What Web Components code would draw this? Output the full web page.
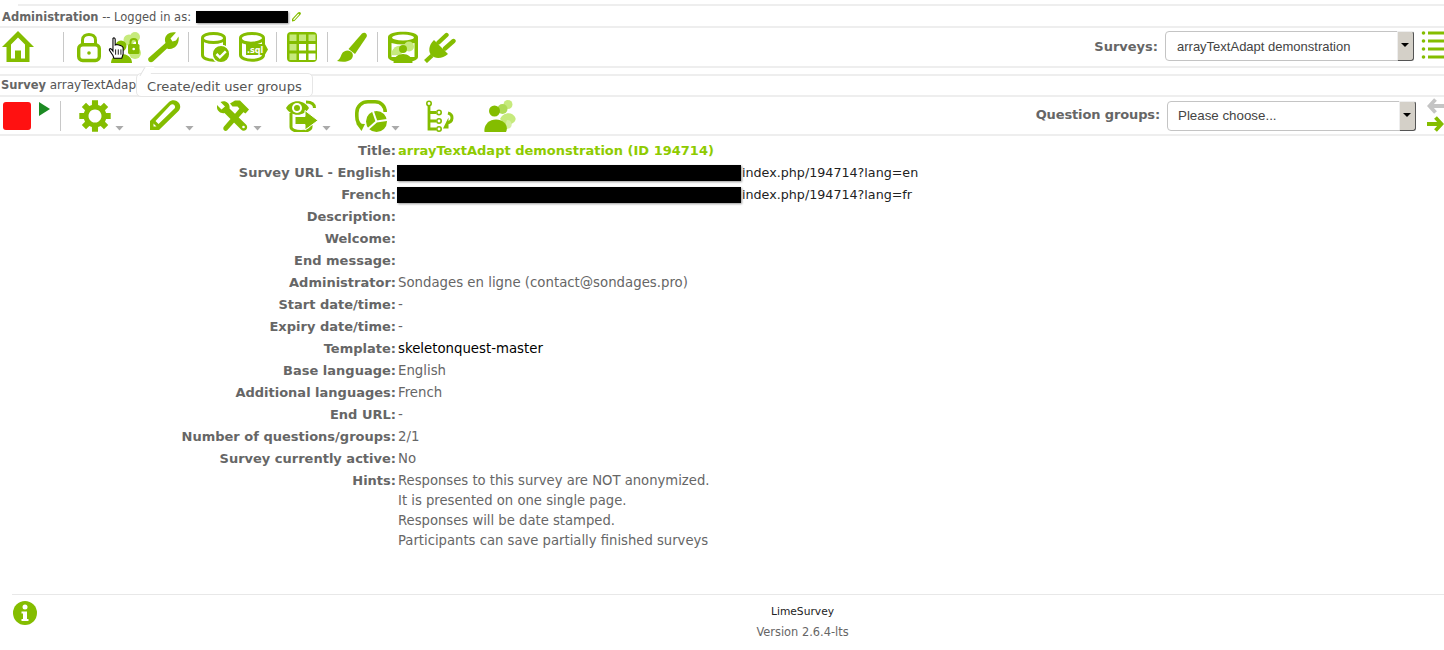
<!DOCTYPE html>
<html lang="en">
<head>
<meta charset="utf-8">
<title>LimeSurvey administration</title>
<style>
  html, body { margin: 0; background: #fff; }
  body { font: 13px "DejaVu Sans", Verdana, sans-serif; color: #666; height: 650px; overflow: hidden; }
</style>
</head>
<body>
<ls-admin-page></ls-admin-page>
<script>
// all icons sit in a 32x32 box unless they say otherwise
const G = '#84bd00'
const L = '#c6ea7c'

const gearPath = () => {
  let d = ''
  for (let i = 0; i < 8; i++) {
    const a = i * Math.PI / 4 - Math.PI / 2
    const p = (r, o) => `${(16 + r * Math.cos(a + o)).toFixed(1)} ${(16 + r * Math.sin(a + o)).toFixed(1)}`
    d += `${i ? 'L' : 'M'}${p(11.5, -0.27)} L${p(16, -0.19)} L${p(16, 0.19)} L${p(11.5, 0.27)} `
  }
  return d + 'Z M16 9.5 a6.5 6.5 0 1 0 0.01 0 Z'
}

const cylinder = `<path d="M2.500 7C2.500 1 24.500 1 24.500 7V24C24.500 31 2.500 31 2.500 24ZM2.500 8C5 12.500 22 12.500 24.500 8" fill="none" stroke="${G}" stroke-width="3"/>`

const ICONS = {
  home: `<path d="M16 0 32 16H27.500V31H4.500V16H0ZM16 6.500 9 13.500V27.500H13V19.500H19V27.500H23V13.500Z" fill-rule="evenodd" fill="${G}"/>`,
  lock: `<path d="M9.500 14V9C9.500 1.500 22.500 1.500 22.500 9V14" fill="none" stroke="${G}" stroke-width="3"/><rect x="5.700" y="13.700" width="20.600" height="15.800" rx="4" fill="none" stroke="${G}" stroke-width="3.400"/><circle cx="16" cy="22" r="1.800" fill="${G}"/>`,
  userlock: `<circle cx="25" cy="6" r="5" fill="${L}"/><circle cx="19" cy="9" r="5.500" fill="${L}"/><circle cx="25" cy="22" r="6" fill="${L}"/><circle cx="11" cy="15" r="5.500" fill="${G}"/><path d="M1 32C1 20 22 20 22 32Z" fill="${G}"/><rect x="18" y="13" width="11.500" height="10" rx="1.500" fill="${G}"/><path d="M20.500 13.500V11C20.500 7 27 7 27 11V13.500" fill="none" stroke="${G}" stroke-width="2"/><circle cx="23.700" cy="18" r="1.300" fill="#fff"/>`,
  wrench: `<path d="M1.500 27 18.500 12C16 5 22 0 29 1.500L23.500 7.500 25.500 10.500 29 9.500 31.500 5.500C33 13 27 20 20 17.500L6 30.500C3.500 32.500 0 30 1.500 27Z" fill="${G}"/>`,
  dbcheck: cylinder + `<circle cx="21" cy="23" r="8.800" fill="${G}" stroke="#fff" stroke-width="1.400"/><path d="M16.500 23 19.800 26.300 25.800 20.300" fill="none" stroke="#fff" stroke-width="2.500"/>`,
  dbsql: cylinder.replace(/2\.500/g, '3.500').replace(/24\.500/g, '26.500') + `<path d="M9 13H26V9.500L31 18.500 26 27V24H9Z" fill="${G}"/><text x="10" y="22" font-family="'DejaVu Sans'" font-size="8" font-weight="700" fill="#fff">.sql</text>`,
  grid: `<rect x="1" y="1" width="30" height="30" rx="4" fill="${G}"/>` + [3.5, 13, 22.5].flatMap((y, r) => [3.500, 13, 22.500].map((x, c) => `<rect x="${x}" y="${y}" width="7" height="6.500" fill="${r && c ? '#fff' : L}"/>`)).join(''),
  brush: `<path d="M12.500 18 26 2.500C28.500 .5 32 3 30.500 6L19 23Z" fill="${G}"/><path d="M12 19.500C17 20 18.500 25 15 28.500 11 31.500 5 31 1 30 4 28 4.500 26 5.500 23.500 7 20.500 9 19.500 12 19.500Z" fill="${G}"/>`,
  dbusers: `<path d="M1 6C1 -1 31 -1 31 6V26C31 33 1 33 1 26Z" fill="${G}"/><ellipse cx="16" cy="6.500" rx="11" ry="3" fill="#fff"/><path d="M4.500 12C12 14 20 14 27.500 12V26H4.500Z" fill="#fff"/><circle cx="22" cy="15.500" r="5" fill="${L}"/><path d="M4.500 21C8 13 15 13 18 19 15 24 9 25 4.500 24Z" fill="${L}"/><circle cx="16" cy="18" r="4" fill="${G}"/><path d="M6.500 32C6.500 20 25.500 20 25.500 32Z" fill="${G}"/>`,
  plug: `<path d="M8 24.500 1.500 30.500" stroke="${G}" stroke-width="4.200" fill="none"/><path d="M10 9 24 23C18.500 28 11 28 7.500 24.500 4 21 4.500 14 10 9Z" fill="${G}"/><path d="M14.500 11.500 22.500 4M21 17.500 29.500 10" stroke="${G}" stroke-width="4.400" stroke-linecap="round" fill="none"/>`,
  gear: `<path d="${gearPath()}" fill-rule="evenodd" fill="${G}"/>`,
  pencil: `<path d="M1 21 20 2C23 -1 28 0 30 3 32 6 31.500 9 29 11.500L10 30H1ZM6.500 21 9.500 24 25.500 8.500C27.500 6 24 2.500 21.500 5ZM4.500 23.500V26.500H7.500Z" fill-rule="evenodd" fill="${G}"/>`,
  tools: `<path d="M7 26.500 23 8 27 11.500 10 30.500C7.500 32 5 29 7 26.500Z" fill="${G}"/><path d="M13 3.500 18 .5H23L32 9.500 28.500 13.500 24 10.500 20.500 6.500H15.500Z" fill="${G}"/><path d="M0 5 4.500 9.500 8 6.500 3.500 2C8 -.5 13.500 3 12.500 8.500L29 24.500C32.500 28 27.500 33 24 29.500L7.500 13C3.500 14 -1 10.500 0 5Z" fill="${G}"/><circle cx="26.500" cy="27" r="1.300" fill="#fff"/>`,
  eyedb: `<path d="M5 13V27C5 33 25 33 25 27V25M20 2C25 2 28.500 4 28.500 8" fill="none" stroke="${G}" stroke-width="3"/><path d="M0 8C5 -1 18 -1 23 8 18 17 5 17 0 8Z" fill="${G}"/><circle cx="11" cy="8" r="5" fill="#fff"/><circle cx="11" cy="8" r="3" fill="${G}"/><path d="M9 16.500H19V10.500L32 20.500 19 30V24.500H9Z" fill="${G}" stroke="#fff" stroke-width="1"/>`,
  stats: `<path d="M6.500 26C3 24 1.800 20 1.800 16V13C1.800 6 7 1.800 13 1.800H20C26 1.800 30.200 6 30.200 12" fill="none" stroke="${G}" stroke-width="3.600"/><path d="M1 23.500 10 24 6.500 31Z" fill="${G}"/><circle cx="21.500" cy="21.500" r="10.500" fill="${G}"/><path d="M21.500 21.500 17.500 10M21.500 21.500 32 20M21.500 21.500 13 29" stroke="#fff" stroke-width="2"/>`,
  tree: `<path d="M4 5V29H11M4 12.500H11M4 21H11" fill="none" stroke="${G}" stroke-width="2.800"/><circle cx="4" cy="3.500" r="2.200" fill="#fff" stroke="${G}" stroke-width="1.600"/><circle cx="14" cy="12.500" r="2.200" fill="#fff" stroke="${G}" stroke-width="1.600"/><circle cx="14" cy="21" r="2.200" fill="#fff" stroke="${G}" stroke-width="1.600"/><circle cx="14" cy="29" r="2.200" fill="#fff" stroke="${G}" stroke-width="1.600"/><path d="M23 13C28.500 14.500 28.500 22 22 23" fill="none" stroke="${G}" stroke-width="3"/><path d="M23.500 17.500V28.500H18Z" fill="${G}"/>`,
  users: `<circle cx="24" cy="4.500" r="4.500" fill="${L}"/><path d="M16 19C19 12 29 11 31.500 18 32.500 22 27 25 22 25Z" fill="${L}"/><circle cx="18.500" cy="9" r="5" fill="#aedb55"/><circle cx="10.500" cy="11" r="5.500" fill="${G}"/><path d="M23 20C28 20 29 26 26 28 24 29 22 29 20 29Z" fill="#d5efa2"/><path d="M.5 32C-.5 25 5 19.500 12 19.500 20 19.500 25 26 22 32Z" fill="${G}"/>`,
  list: `<circle cx="2.500" cy="2" r="1.800" fill="${G}"/><circle cx="2.500" cy="10" r="1.800" fill="${G}"/><circle cx="2.500" cy="18" r="1.800" fill="${G}"/><circle cx="2.500" cy="26" r="1.800" fill="${G}"/><path d="M7 2H23M7 10H23M7 18H23M7 26H23" stroke="${G}" stroke-width="3"/>`,
  left: `<path d="M8.500 1.500 2.500 8 8.500 14.500M3 8H17" fill="none" stroke="#c4c4c4" stroke-width="3.800"/>`,
  right: `<path d="M8.500 1.500 14.500 8 8.500 14.500M0 8H14" fill="none" stroke="${G}" stroke-width="3.800"/>`
}

class LsIcon extends HTMLElement {
  connectedCallback() {
    const w = this.getAttribute('w') || 32
    const h = this.getAttribute('h') || 32
    const name = this.getAttribute('name')
    this.attachShadow({ mode: 'open' }).innerHTML = `
      <style>
        :host { display: block; flex: none; width: ${w}px; height: ${h}px; line-height: 0; }
        svg { width: 100%; height: 100%; overflow: hidden; }
      </style>
      <svg viewBox="0 0 ${w} ${h}" role="img" aria-label="${name}">${ICONS[name]}</svg>`
  }
}
customElements.define('ls-icon', LsIcon)

// icon with the small grey arrow for its dropdown
const menuTemplate = document.createElement('template')
menuTemplate.innerHTML = `
  <style>
    :host { display: flex; flex: none; align-items: flex-end; }
    i { width: 9px; height: 5px; margin: 0 0 1px 4px; background: #aaa; clip-path: polygon(0 0, 100% 0, 50% 100%); }
  </style>
  <slot></slot><i></i>`
class LsMenuIcon extends HTMLElement {
  connectedCallback() {
    this.attachShadow({ mode: 'open' }).appendChild(menuTemplate.content.cloneNode(true))
  }
}
customElements.define('ls-menu-icon', LsMenuIcon)

const sepTemplate = document.createElement('template')
sepTemplate.innerHTML = `<style>:host { display: block; flex: none; width: 1px; height: 30px; background: #c8c8c8; }</style>`
class LsSep extends HTMLElement {
  connectedCallback() {
    this.attachShadow({ mode: 'open' }).appendChild(sepTemplate.content.cloneNode(true))
  }
}
customElements.define('ls-sep', LsSep)

const barTemplate = document.createElement('template')
barTemplate.innerHTML = `
  <style>
    :host { display: flex; align-items: center; box-sizing: border-box; height: 40px; border-bottom: 2px solid #eee; }
    .right { margin-left: auto; display: flex; align-items: center; }
  </style>
  <slot></slot>
  <div class="right"><slot name="right"></slot></div>`
class LsToolbar extends HTMLElement {
  connectedCallback() {
    this.attachShadow({ mode: 'open' }).appendChild(barTemplate.content.cloneNode(true))
  }
}
customElements.define('ls-toolbar', LsToolbar)

const titleTemplate = document.createElement('template')
titleTemplate.innerHTML = `
  <style>
    :host { display: flex; align-items: center; box-sizing: border-box; height: 22px; padding: 1px 2px 0; border-bottom: 2px solid #eee; font-size: 11.5px; color: #555; }
    ::slotted(b) { color: #666; font-size: 11.500px; }
  </style>
  <slot></slot>`
class LsTitleBar extends HTMLElement {
  connectedCallback() {
    this.attachShadow({ mode: 'open' }).appendChild(titleTemplate.content.cloneNode(true))
  }
}
customElements.define('ls-title-bar', LsTitleBar)

const selectTemplate = document.createElement('template')
selectTemplate.innerHTML = `
  <style>
    :host { display: flex; flex: none; box-sizing: border-box; width: 249px; height: 30px; margin-left: 7px; align-items: center;
      border: 1px solid #c4c4c4; border-radius: 4px; padding-left: 11px; position: relative; background: #fff;
      font: 13.33px "Liberation Sans", Arial, sans-serif; color: #444; }
    span { position: absolute; right: -1px; top: -1px; bottom: -1px; width: 15px; background: #d4d0c8;
      border: 1px solid; border-color: #eee #555 #555 #eee; border-radius: 0 3px 3px 0; }
    span::after { content: ""; position: absolute; left: 3px; top: 11px; border: 4px solid transparent; border-top: 4px solid #000; border-bottom: 0; }
  </style>
  <slot></slot><span></span>`
class LsSelect extends HTMLElement {
  connectedCallback() {
    this.attachShadow({ mode: 'open' }).appendChild(selectTemplate.content.cloneNode(true))
  }
}
customElements.define('ls-select', LsSelect)

const hideTemplate = document.createElement('template')
hideTemplate.innerHTML = `<style>:host { display: inline-block; background: #000; box-shadow: 1px 1px 2px #999; }</style>`
class LsRedact extends HTMLElement {
  connectedCallback() {
    this.attachShadow({ mode: 'open' }).appendChild(hideTemplate.content.cloneNode(true))
  }
}
customElements.define('ls-redact', LsRedact)

const rowTemplate = document.createElement('template')
rowTemplate.innerHTML = `
  <style>
    :host { display: contents; }
    .k { font-size: 13px; font-weight: 700; text-align: right; color: #666; white-space: nowrap; min-height: 22px; line-height: 22px; }
    .v { line-height: 20px; padding-top: 1px; min-height: 21px; white-space: nowrap; display: flex; flex-direction: column; }
  </style>
  <div class="k"></div>
  <div class="v"><slot></slot></div>`
class LsRow extends HTMLElement {
  connectedCallback() {
    this.attachShadow({ mode: 'open' }).appendChild(rowTemplate.content.cloneNode(true))
    this.shadowRoot.querySelector('.k').textContent = this.getAttribute('label') + ':'
  }
}
customElements.define('ls-row', LsRow)

const summaryTemplate = document.createElement('template')
summaryTemplate.innerHTML = `
  <style>
    :host { display: grid; grid-template-columns: 396px 1fr; column-gap: 2px; padding-top: 4px; font-size: 13.3px; color: #666; }
  </style>
  <slot></slot>`
class LsSummary extends HTMLElement {
  connectedCallback() {
    this.attachShadow({ mode: 'open' }).appendChild(summaryTemplate.content.cloneNode(true))
  }
}
customElements.define('ls-summary', LsSummary)

const footTemplate = document.createElement('template')
footTemplate.innerHTML = `
  <style>
    :host { display: grid; grid-template-columns: 24px 1fr; margin: 0 0 0 12px; padding: 6px 0 0 1px; border-top: 1px solid #e8e8e8; }
    .text { text-align: center; padding-left: 124px; line-height: 20px; margin-top: 1px; font-size: 11.4px; }
    .name { color: #222; font-size: 10.7px; }
    svg { width: 24px; height: 24px; }
  </style>
  <svg viewBox="0 0 24 24"><circle cx="12" cy="12" r="12" fill="${G}"/><circle cx="12" cy="6" r="2.500" fill="#fff"/><path d="M8.500 10.500H14V18H15.500V20H8.500V18H10V12.500H8.500Z" fill="#fff"/></svg>
  <div class="text"><div class="name"><slot name="name"></slot></div><div><slot name="version"></slot></div></div>`
class LsFooter extends HTMLElement {
  connectedCallback() {
    this.attachShadow({ mode: 'open' }).appendChild(footTemplate.content.cloneNode(true))
  }
}
customElements.define('ls-footer', LsFooter)

const tipTemplate = document.createElement('template')
tipTemplate.innerHTML = `
  <style>
    :host { position: absolute; left: 136px; top: 73px; box-sizing: border-box; height: 24px; padding: 2px 10px 0; display: flex; align-items: center;
      background: #fff; border: 1px solid #e6e6e6; border-radius: 5px; font-size: 13.1px; color: #555; white-space: nowrap; }
    :host::before { content: ""; position: absolute; left: 3px; top: -7px; width: 9px; height: 9px; background: #fff;
      border-left: 1px solid #e0e0e0; transform: skewX(-30deg) translateX(2px); }
  </style>
  <slot></slot>`
class LsTooltip extends HTMLElement {
  connectedCallback() {
    this.attachShadow({ mode: 'open' }).appendChild(tipTemplate.content.cloneNode(true))
  }
}
customElements.define('ls-tooltip', LsTooltip)

const pageTemplate = document.createElement('template')
pageTemplate.innerHTML = `
  <style>
    :host { display: block; position: relative; height: 650px; padding-top: 4px; box-sizing: border-box; }
    .top { height: 2px; background: #eee; margin-left: 18px; }
    .gap { height: 6px; }
    .redact-admin { width: 92px; height: 12px; margin: 0 3px 0 1px; vertical-align: -2px; }
    .stop { flex: none; width: 28px; height: 28px; background: #f11; border-radius: 3px; }
    .play { flex: none; align-self: flex-start; margin: 5px 0 0 8px; width: 0; height: 0; border-left: 11px solid #1c8a23; border-top: 7px solid transparent; border-bottom: 7px solid transparent; }
    .field { font-weight: 700; color: #666; white-space: nowrap; }
    .url { width: 344px; height: 16px; flex: none; margin-left: -1px; margin-right: 1px; }
    .line { display: flex; align-items: center; height: 20px; font-size: 12.7px; }
    .link { color: #222; }
    .title { color: #8ecb00; font-weight: 700; font-size: 13px; }
    .hints { font-size: 13.2px; }
    .arrows { display: flex; flex-direction: column; gap: 2px; margin: -1px 0 0 11px; }
    .hand { position: absolute; left: 108px; top: 37px; width: 17px; height: 23px; }
    ls-footer { position: absolute; left: 0; right: 0; top: 594px; }
    .list { margin: 0 0 0 7px; }
    .up { margin-top: -2px; }
  </style>
  <div class="top"></div>
  <ls-title-bar><b>Administration</b>&nbsp;-- Logged in as:&nbsp;<ls-redact class="redact-admin"></ls-redact><svg width="11" height="12" viewBox="0 0 11 12"><path d="M1 8 7 1.500C8.500 0 11 2 9.500 3.500L3.500 10 1 10.500ZM2.500 8 2.300 9 3.200 9 8.200 3.500 7.300 2.700Z" fill="${G}" fill-rule="evenodd"/></svg></ls-title-bar>
  <ls-toolbar>
    <ls-icon name="home" style="margin-left:2px"></ls-icon>
    <ls-sep style="margin-left:29px"></ls-sep>
    <ls-icon name="lock" style="margin-left:9px"></ls-icon>
    <ls-icon name="userlock" style="margin-left:5px"></ls-icon>
    <ls-icon name="wrench" style="margin-left:5px"></ls-icon>
    <ls-sep style="margin-left:9px"></ls-sep>
    <ls-icon name="dbcheck" style="margin-left:11px"></ls-icon>
    <ls-icon name="dbsql" style="margin-left:5px"></ls-icon>
    <ls-sep style="margin-left:7px"></ls-sep>
    <ls-icon name="grid" style="margin-left:9px"></ls-icon>
    <ls-sep style="margin-left:9px"></ls-sep>
    <ls-icon name="brush" style="margin-left:8px"></ls-icon>
    <ls-sep style="margin-left:9px"></ls-sep>
    <ls-icon name="dbusers" style="margin-left:9px"></ls-icon>
    <ls-icon name="plug" style="margin-left:5px"></ls-icon>
    <span class="field up" slot="right">Surveys:</span>
    <ls-select class="up" slot="right" style="font-size:13px">arrayTextAdapt demonstration</ls-select>
    <ls-icon class="list up" slot="right" name="list" w="23" h="30"></ls-icon>
  </ls-toolbar>
  <div class="gap"></div>
  <ls-title-bar style="border-top:2px solid #eee;height:23px;padding:0 1px 1px;font-size:12px"><b>Survey</b>&nbsp;arrayTextAdap</ls-title-bar>
  <ls-toolbar style="height:39px">
    <div class="stop" style="margin-left:3px"></div>
    <div class="play"></div>
    <ls-sep style="margin-left:10px"></ls-sep>
    <ls-menu-icon style="margin-left:18px"><ls-icon name="gear"></ls-icon></ls-menu-icon>
    <ls-menu-icon style="margin-left:25px"><ls-icon name="pencil"></ls-icon></ls-menu-icon>
    <ls-menu-icon style="margin-left:23px"><ls-icon name="tools"></ls-icon></ls-menu-icon>
    <ls-menu-icon style="margin-left:24px"><ls-icon name="eyedb"></ls-icon></ls-menu-icon>
    <ls-menu-icon style="margin-left:24px"><ls-icon name="stats"></ls-icon></ls-menu-icon>
    <ls-icon name="tree" style="margin-left:25px"></ls-icon>
    <ls-icon name="users" style="margin-left:27px"></ls-icon>
    <span class="field up" slot="right" style="letter-spacing:-.13px">Question groups:</span>
    <ls-select slot="right" style="padding-left:10px">Please choose...</ls-select>
    <div class="arrows" slot="right"><ls-icon name="left" w="17" h="16"></ls-icon><ls-icon name="right" w="17" h="16"></ls-icon></div>
  </ls-toolbar>
  <ls-summary>
    <ls-row label="Title"><span class="title">arrayTextAdapt demonstration (ID 194714)</span></ls-row>
    <ls-row label="Survey URL - English"><span class="line link"><ls-redact class="url"></ls-redact>index.php/194714?lang=en</span></ls-row>
    <ls-row label="French"><span class="line link"><ls-redact class="url"></ls-redact>index.php/194714?lang=fr</span></ls-row>
    <ls-row label="Description"></ls-row>
    <ls-row label="Welcome"></ls-row>
    <ls-row label="End message"></ls-row>
    <ls-row label="Administrator">Sondages en ligne (contact@sondages.pro)</ls-row>
    <ls-row label="Start date/time">-</ls-row>
    <ls-row label="Expiry date/time">-</ls-row>
    <ls-row label="Template"><span style="color:#000">skeletonquest-master</span></ls-row>
    <ls-row label="Base language">English</ls-row>
    <ls-row label="Additional languages">French</ls-row>
    <ls-row label="End URL">-</ls-row>
    <ls-row label="Number of questions/groups">2/1</ls-row>
    <ls-row label="Survey currently active">No</ls-row>
    <ls-row label="Hints">
      <div class="hints">Responses to this survey are NOT anonymized.</div>
      <div class="hints">It is presented on one single page.</div>
      <div class="hints">Responses will be date stamped.</div>
      <div class="hints">Participants can save partially finished surveys</div>
    </ls-row>
  </ls-summary>
  <ls-footer><span slot="name">LimeSurvey</span><span slot="version">Version 2.6.4-lts</span></ls-footer>
  <ls-tooltip>Create/edit user groups</ls-tooltip>
  <svg class="hand" viewBox="0 0 18 26"><path d="M5 1.500C6 .5 7.500 1 7.500 2.500V9L9.500 8.500 11.500 9 13.500 9.500 15.500 10.500 16.500 12V19L15 24H6L5 21 1 15C.5 13 2 12.500 3.500 14L5 16Z" fill="#fff" stroke="#000" stroke-width="1.200"/><path d="M8 14V20M11 14V20M14 14V20" stroke="#000" stroke-width="1"/></svg>`
class LsAdminPage extends HTMLElement {
  connectedCallback() {
    this.attachShadow({ mode: 'open' }).appendChild(pageTemplate.content.cloneNode(true))
  }
}
customElements.define('ls-admin-page', LsAdminPage)
</script>
</body>
</html>
